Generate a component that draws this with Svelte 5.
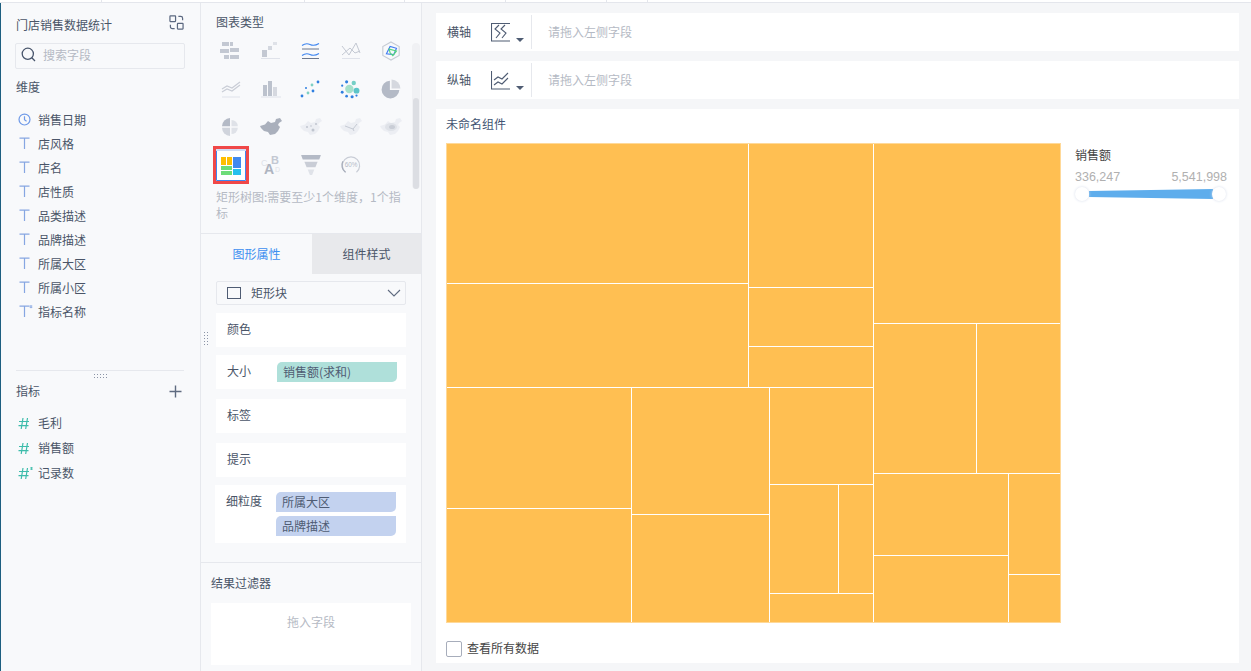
<script>
  const dims = [
    { name: '销售日期', icon: 'clock' },
    { name: '店风格', icon: 'T' },
    { name: '店名', icon: 'T' },
    { name: '店性质', icon: 'T' },
    { name: '品类描述', icon: 'T' },
    { name: '品牌描述', icon: 'T' },
    { name: '所属大区', icon: 'T' },
    { name: '所属小区', icon: 'T' },
    { name: '指标名称', icon: 'T*' }
  ];
  const metrics = [
    { name: '毛利', star: false },
    { name: '销售额', star: false },
    { name: '记录数', star: true }
  ];

  // x0, y0, x1, y1 of each tile, relative to the chart
  const tiles = [
    [0, 0, 302, 140], [0, 140, 302, 244], [302, 0, 427, 144], [302, 144, 427, 203], [302, 203, 427, 244],
    [0, 244, 185, 365], [0, 365, 185, 480], [185, 244, 323, 371], [185, 371, 323, 480],
    [323, 244, 427, 341], [323, 341, 392, 450], [392, 341, 427, 450], [323, 450, 427, 480],
    [427, 0, 615, 180], [427, 180, 530, 330], [530, 180, 615, 330],
    [427, 330, 562, 412], [427, 412, 562, 480], [562, 330, 615, 431], [562, 431, 615, 480]
  ];

  const china = 'M0 8L5 6.500 8 3 11 5 15 4 16 1 20 0 22 3 19 5 18 7 20 9 18 13 15 16 10 17 8 14 4 13 1 10z';
</script>

<div class="page">
  <div class="topline">
    <i style="left:101px"></i><i style="left:304px"></i><i style="left:404px"></i><i style="left:505px"></i><i style="left:606px"></i><i style="left:647px"></i>
  </div>
  <div class="main">
    <aside class="fields">
      <div class="ds-title">
        <span>门店销售数据统计</span>
        <svg width="15" height="15" viewBox="0 0 16 16" fill="none" stroke="#5b6880" stroke-width="1.300">
          <rect x="1" y="1" width="6" height="6" rx="0.500" />
          <rect x="9" y="9" width="6" height="6" rx="0.500" />
          <path d="M10 1.500h2.500a2 2 0 0 1 2 2v2M6 14.500H3.500a2 2 0 0 1-2-2v-2" />
        </svg>
      </div>
      <div class="search">
        <svg width="15" height="15" viewBox="0 0 15 15" fill="none" stroke="#47546b" stroke-width="1.300">
          <circle cx="6.800" cy="6.800" r="5.600" /><path d="M10.800 10.800l3.200 3.200" />
        </svg>
        <span>搜索字段</span>
      </div>
      <div class="sec">维度</div>
      <ul class="dim-list">
        {#each dims as d}
          <li>
            <span class="ico">
              {#if d.icon === 'clock'}
                <svg width="13" height="13" viewBox="0 0 14 14" fill="none" stroke="#6f9ae8" stroke-width="1.300">
                  <circle cx="7" cy="7" r="5.900" /><path d="M7 3.500V7.300l2.200 1.500" />
                </svg>
              {:else}
                <svg width="16" height="14" viewBox="0 0 16 14" fill="none" stroke="#86a6e2" stroke-width="1.200">
                  <path d="M1.500 2.200h10M6.500 2.200V13" />
                  {#if d.icon === 'T*'}<path d="M13 1.200v3M11.700 2h2.600M11.700 3.400h2.600" stroke-width="0.800" />{/if}
                </svg>
              {/if}
            </span>
            <span class="name">{d.name}</span>
          </li>
        {/each}
      </ul>
      <div class="divider"><span class="dots h"></span></div>
      <div class="sec metric-head">
        <span>指标</span>
        <svg width="13" height="13" viewBox="0 0 13 13" stroke="#5f6b80" stroke-width="1.400"><path d="M6.500 0.500v12M0.500 6.500h12" /></svg>
      </div>
      <ul class="metric-list">
        {#each metrics as m}
          <li>
            <span class="ico">
              <svg width="16" height="14" viewBox="0 0 16 14" fill="none" stroke="#3dbcab" stroke-width="1.200">
                <path d="M5 2L3.200 13M9.500 2L7.700 13M1 5.500h10M0.500 9.700h10" />
                {#if m.star}<path d="M13.500 1v3M12.200 1.800h2.600M12.200 3.200h2.600" stroke-width="0.800" />{/if}
              </svg>
            </span>
            <span class="name">{m.name}</span>
          </li>
        {/each}
      </ul>
    </aside>

    <section class="config">
      <div class="types">
        <div class="types-title">图表类型</div>
        <div class="type-grid">
          <!-- row 1 -->
          <svg viewBox="0 0 22 18"><g fill="#c3c8d2"><rect x="2" y="0" width="7" height="4"/><rect x="10" y="0" width="3" height="4"/><rect x="0" y="7" width="9" height="4"/><rect x="10" y="6" width="9" height="4"/><rect x="4" y="13" width="5" height="4"/><rect x="10" y="13" width="9" height="4"/></g></svg>
          <svg viewBox="0 0 22 18"><path d="M1 16.500h19" stroke="#dfe2ea"/><rect x="2" y="8" width="5" height="7" fill="#c3c8d2"/><rect x="8" y="4" width="4" height="4" fill="#d3d7df"/><rect x="13" y="0" width="4" height="3" fill="#dfe2e8"/></svg>
          <svg viewBox="0 0 22 18" fill="none"><path d="M2 3.500q4-3 8-1t9-1M2 13.500q4-3 8-1t9-1" stroke="#3f86f0" stroke-width="1.100"/><path d="M2 7h17M2 16.500h17" stroke="#5b6880" stroke-width="0.900"/></svg>
          <svg viewBox="0 0 22 18" fill="none"><path d="M2 4l7 9 7-12 4 10M2 13l8-7 5 5 5-2" stroke="#c3c8d2" stroke-width="1"/><path d="M2 16.500h18" stroke="#dfe2ea"/></svg>
          <svg viewBox="0 0 22 22" fill="none"><path d="M11 1l9 5v10l-9 5-9-5V6z" stroke="#c6cbd4" stroke-width="1.200"/><path d="M6 14l4-8 7 2-3 7z" stroke="#3f7cf0" stroke-width="1.300"/><path d="M9 9l8 2-4 5-3-3z" stroke="#59d878" stroke-width="1.300"/></svg>
          <!-- row 2 -->
          <svg viewBox="0 0 22 18" fill="none"><path d="M2 9l5-3 5 2 8-6M2 12l5-3 5 2 8-6" stroke="#c9cdd6" stroke-width="1.200"/><path d="M2 17h18" stroke="#dfe2ea"/></svg>
          <svg viewBox="0 0 22 18"><g fill="#bcc2cd"><rect x="3" y="5" width="4" height="11"/><rect x="8" y="1" width="4" height="15"/></g><rect x="13" y="7" width="4" height="9" fill="#d6d9e0"/><path d="M1 17h20" stroke="#dfe2ea"/></svg>
          <svg viewBox="0 0 22 18"><g fill="#2f7fe0"><circle cx="18" cy="2" r="1.400"/><circle cx="13" cy="11" r="1.400"/><circle cx="2" cy="16" r="1.400"/><circle cx="6" cy="8" r="1"/></g><g fill="#7ed0c4"><circle cx="12" cy="5" r="1.400"/><circle cx="8" cy="13" r="1.400"/></g></svg>
          <svg viewBox="0 0 20 18"><circle cx="8.500" cy="9" r="3.800" fill="#a5e0cb"/><circle cx="15" cy="10.500" r="2.700" fill="#5cc5c8"/><circle cx="12.500" cy="3.500" r="2" fill="#76cfc6"/><g fill="#2f7fe0"><circle cx="6" cy="2.500" r="1.400"/><circle cx="2" cy="6" r="1"/><circle cx="2" cy="12" r="1.300"/><circle cx="6" cy="15.500" r="1.200"/><circle cx="11" cy="16" r="1.400"/><circle cx="15" cy="15" r="1"/></g></svg>
          <svg viewBox="0 0 18 18"><path d="M8 1.500a8 8 0 1 0 8.500 8.500H8z" fill="#b4bac6"/><path d="M9.500 0.500a8 8 0 0 1 8 8h-8z" fill="#d5d8df"/></svg>
          <!-- row 3 -->
          <svg viewBox="0 0 22 20"><path d="M10 1v8.300H2a8.500 8.500 0 0 1 8-8.300z" fill="#b4bac6"/><path d="M11.500 3a6.300 6.300 0 0 1 6.300 6.300h-6.300z" fill="#dfe2e8"/><path d="M2 10.700h8V19a8.500 8.500 0 0 1-8-8.300z" fill="#d0d4dc"/><path d="M11.500 10.700h6.300a6.300 6.300 0 0 1-6.300 6.300z" fill="#dfe2e8"/></svg>
          <svg viewBox="0 0 22 18"><path d={china} fill="#aab0bc"/></svg>
          <svg viewBox="0 0 22 18"><path d={china} fill="#eceef3"/><g fill="#c0c5cf"><circle cx="7" cy="9" r="1"/><circle cx="16" cy="6" r="1"/><circle cx="13" cy="12" r="1.500"/><circle cx="11" cy="8" r="0.800"/></g></svg>
          <svg viewBox="0 0 22 18"><path d={china} fill="#eceef3"/><path d="M5 8l8 3 4-5M13 11l1 2" stroke="#c0c5cf" stroke-width="0.900" fill="none"/></svg>
          <svg viewBox="0 0 22 18"><path d={china} fill="#eceef3"/><ellipse cx="11" cy="9" rx="6" ry="4" fill="#dfe2e8"/><ellipse cx="12" cy="9" rx="3" ry="2" fill="#c9cdd6"/></svg>
          <!-- row 4 -->
          <div class="treemap-pick">
            <svg viewBox="0 0 30 32" width="30" height="32">
              <rect width="30" height="32" fill="#fff"/>
              <rect x="0" y="0" width="30" height="2" fill="#cfdcf5"/>
              <path d="M0.500 2v29.500h29V2" fill="none" stroke="#3f86f0"/>
              <rect x="5" y="8" width="5" height="8" fill="#ffbe00"/><rect x="11" y="8" width="5" height="8" fill="#ffbe00"/>
              <rect x="5" y="17" width="11" height="4" fill="#6edc78"/><rect x="5" y="22" width="11" height="4" fill="#6edc78"/>
              <rect x="17" y="8" width="8" height="11" fill="#4189ee"/><rect x="17" y="20" width="8" height="6" fill="#27c0ee"/>
            </svg>
          </div>
          <svg class="letters" viewBox="0 0 22 20"><text x="1" y="11" font-size="9" fill="#dfe2e8" font-family="Liberation Sans">C</text><text x="11" y="9" font-size="11" fill="#c3c8d2" font-family="Liberation Sans" font-weight="700">B</text><text x="4" y="19" font-size="14" fill="#aeb4c0" font-family="Liberation Sans" font-weight="700">A</text><text x="15" y="17" font-size="7" fill="#dfe2e8" font-family="Liberation Sans">D</text></svg>
          <svg viewBox="0 0 20 18"><path d="M1 0h18l-1.500 4h-15z" fill="#b4bac6"/><path d="M4 6h12l-2 5H6z" fill="#c9cdd6"/><path d="M7 13h6l-2 5H9z" fill="#e0e3e9"/></svg>
          <svg viewBox="0 0 22 22" fill="none"><path d="M5 19a9.500 9.500 0 1 1 12 0" stroke="#c9cdd6" stroke-width="1.300"/><path d="M5 19a9.500 9.500 0 0 1-3-12" stroke="#a5abb8" stroke-width="1.300"/><text x="11" y="13" font-size="7" text-anchor="middle" fill="#b4bac6" stroke="none" font-family="Liberation Sans">60%</text></svg>
        </div>
        <p class="hint">矩形树图:需要至少1个维度，1个指标</p>
        <div class="scroll"><div class="thumb"></div></div>
      </div>

      <div class="tabs">
        <div class="tab active">图形属性</div>
        <div class="tab">组件样式</div>
      </div>

      <div class="props">
        <span class="dots v"></span>
        <div class="mark-select">
          <span class="mark-box"></span>
          <span class="mark-name">矩形块</span>
          <svg width="14" height="8" viewBox="0 0 14 8" fill="none" stroke="#5f6b80" stroke-width="1.100"><path d="M1 1l6 6 6-6" /></svg>
        </div>
        <div class="prop"><span class="lbl">颜色</span></div>
        <div class="prop"><span class="lbl">大小</span><span class="pill green size-pill">销售额(求和)</span></div>
        <div class="prop spaced"><span class="lbl">标签</span></div>
        <div class="prop spaced"><span class="lbl">提示</span></div>
        <div class="prop gran">
          <span class="gran-label">细粒度</span>
          <div class="gran-pills">
            <span class="pill blue">所属大区</span>
            <span class="pill blue">品牌描述</span>
          </div>
        </div>
      </div>

      <div class="filter">
        <div class="filter-title">结果过滤器</div>
        <div class="filter-drop">拖入字段</div>
      </div>
    </section>

    <section class="board">
      <div class="axis">
        <span class="axis-label">横轴</span>
        <span class="axis-icon">
          <svg width="20" height="19" viewBox="0 0 20 19" fill="none" stroke="#4f5c73" stroke-width="1.100"><path d="M19 0.500H0.500V18H19" /><path d="M8 2L4 6l5 4-4 5M14 2l-4 4 5 4-4 5" /></svg>
          <i class="caret"></i>
        </span>
        <span class="axis-hint">请拖入左侧字段</span>
      </div>
      <div class="axis">
        <span class="axis-label">纵轴</span>
        <span class="axis-icon">
          <svg width="20" height="19" viewBox="0 0 20 19" fill="none" stroke="#4f5c73" stroke-width="1.100"><path d="M0.500 0v18H19" /><path d="M3 9l4-3 4 2 6-6M3 14l4-3 4 2 6-6" /></svg>
          <i class="caret"></i>
        </span>
        <span class="axis-hint">请拖入左侧字段</span>
      </div>

      <div class="widget">
        <div class="widget-title">未命名组件</div>
        <div class="chart-row">
          <svg class="treemap" width="615" height="480" viewBox="0 0 615 480">
            {#each tiles as t}
              <rect x={t[0] + 1} y={t[1] + 1} width={t[2] - t[0] - 1} height={t[3] - t[1] - 1} fill="#ffbf52" />
            {/each}
            <rect x="0.500" y="0.500" width="614" height="479" fill="none" stroke="#ffd999" />
          </svg>
          <div class="legend">
            <div class="legend-title">销售额</div>
            <div class="legend-range"><span>336,247</span><span>5,541,998</span></div>
            <div class="legend-slider">
              <svg width="124" height="10" viewBox="0 0 124 10" preserveAspectRatio="none"><path d="M0 2L124 0v10L0 8z" fill="#5eadec" /></svg>
              <i class="knob left"></i><i class="knob right"></i>
            </div>
          </div>
        </div>
        <label class="see-all"><span class="check"></span><span class="see-text">查看所有数据</span></label>
      </div>
    </section>
  </div>
</div>

<style>
  :global(body) {
    margin: 0;
    overflow: hidden;
  }

  .page {
    width: 1251px;
    height: 671px;
    display: flex;
    flex-direction: column;
    overflow: hidden;
    background: #f5f6f8;
    font-family: "Noto Sans CJK SC", "Liberation Sans", sans-serif;
    font-size: 12px;
    color: #4a5568;
    box-shadow: inset 1px 0 0 #1d5f80;
  }

  .topline {
    height: 2px;
    flex: none;
    position: relative;
    background: #fff;
    border-bottom: 1px solid #e4e6ec;
  }

  .topline i {
    position: absolute;
    top: 0;
    width: 1px;
    height: 2px;
    background: #e4e6ec;
  }

  .main {
    flex: 1;
    display: flex;
    min-height: 0;
  }

  ul {
    list-style: none;
    margin: 0;
    padding: 0;
  }

  /* left field list */
  .fields {
    width: 200px;
    flex: none;
    box-sizing: border-box;
    margin-left: 1px;
    padding: 11px 15px 0 15px;
    background: #f8f9fb;
    border-right: 1px solid #e6e8ed;
  }

  .ds-title {
    height: 20px;
    display: flex;
    align-items: center;
    justify-content: space-between;
    padding-right: 1px;
  }

  .ds-title svg {
    margin-top: -3px;
  }

  .search {
    height: 26px;
    box-sizing: border-box;
    margin: 9px 0 0 -1px;
    display: flex;
    align-items: center;
    gap: 7px;
    padding: 0 0 3px 5px;
    border: 1px solid #e6e8ed;
    border-radius: 2px;
    color: #b5bac4;
  }

  .sec {
    height: 20px;
    line-height: 20px;
    margin-top: 8px;
  }

  .dim-list {
    margin-top: 10px;
    height: 263px;
  }

  .dim-list li,
  .metric-list li {
    height: 24px;
    display: flex;
    align-items: center;
  }

  .metric-list li {
    height: 25px;
  }

  .ico {
    width: 22px;
    display: flex;
    flex: none;
    padding-left: 2px;
    box-sizing: border-box;
  }

  .divider {
    height: 10px;
    border-top: 1px solid #e6e8ed;
    margin-right: 1px;
    display: flex;
    justify-content: center;
    padding-top: 2px;
    box-sizing: border-box;
  }

  .metric-head {
    display: flex;
    justify-content: space-between;
    align-items: center;
    margin-top: 1px;
    padding-right: 3px;
  }

  .metric-list {
    margin-top: 9px;
  }

  .dots {
    display: block;
    background-image: radial-gradient(#8b94a6 0.7px, transparent 0.8px);
    background-size: 3px 3px;
  }

  .dots.h {
    width: 14px;
    height: 6px;
  }

  .dots.v {
    position: absolute;
    left: 2px;
    top: 57px;
    width: 6px;
    height: 14px;
  }

  /* middle config column */
  .config {
    width: 220px;
    flex: none;
    display: flex;
    flex-direction: column;
    background: #f8f9fb;
    border-right: 1px solid #e6e8ed;
  }

  .types {
    height: 231px;
    flex: none;
    position: relative;
    box-sizing: border-box;
    padding: 9px 0 0 15px;
    border-bottom: 1px solid #e6e8ed;
  }

  .types-title {
    height: 20px;
    line-height: 20px;
  }

  .type-grid {
    display: grid;
    grid-template-columns: repeat(5, 22px);
    grid-auto-rows: 20px;
    column-gap: 18px;
    row-gap: 18px;
    margin: 9px 0 0 4px;
    width: 180px;
    align-items: center;
    justify-items: center;
  }

  .type-grid > svg {
    width: 22px;
    height: 20px;
  }

  .type-grid > svg.letters {
    overflow: visible;
  }

  .treemap-pick {
    width: 30px;
    height: 32px;
    border: 3px solid #f04848;
    line-height: 0;
    margin: -9px -7px;
  }

  .hint {
    margin: 14px 15px 0 0;
    width: 190px;
    line-height: 16px;
    color: #b5bac4;
  }

  .scroll {
    position: absolute;
    right: 1px;
    top: 40px;
    width: 8px;
    height: 146px;
    border-radius: 4px;
    background: #f0f1f4;
  }

  .thumb {
    position: absolute;
    left: 1px;
    right: 1px;
    top: 55px;
    bottom: 0;
    border-radius: 3px;
    background: #dcdee3;
  }

  .tabs {
    display: flex;
    height: 40px;
    flex: none;
  }

  .tab {
    flex: 1;
    display: flex;
    align-items: center;
    justify-content: center;
    padding-bottom: 2px;
    box-sizing: border-box;
    background: #e8e9ec;
  }

  .tab.active {
    flex: none;
    width: 111px;
    background: #f8f9fb;
    color: #3d8ff0;
  }

  .props {
    position: relative;
    flex: none;
    height: 289px;
    box-sizing: border-box;
    padding: 7px 15px 0 15px;
    display: flex;
    flex-direction: column;
    gap: 8px;
    border-bottom: 1px solid #e6e8ed;
  }

  .mark-select {
    height: 22px;
    display: flex;
    align-items: center;
    padding: 0 4px 0 10px;
    border: 1px solid #e6e8ed;
    border-radius: 2px;
  }

  .mark-box {
    width: 12px;
    height: 10px;
    border: 1.500px solid #4f5c73;
  }

  .mark-name {
    flex: 1;
    margin-left: 10px;
    padding-bottom: 2px;
  }

  .prop {
    height: 34px;
    display: flex;
    align-items: center;
    padding-left: 11px;
    background: #fff;
    flex: none;
  }

  .prop.spaced {
    margin-top: 2px;
  }

  .lbl {
    padding-bottom: 3px;
  }

  .pill {
    height: 20px;
    display: block;
    line-height: 19px;
    box-sizing: border-box;
    padding-left: 6px;
    border-radius: 5px 0 5px 0;
    color: #4f5c73;
  }

  .green {
    background: #afe0da;
  }

  .blue {
    background: #c3d2ef;
  }

  .size-pill {
    width: 120px;
    margin-left: 26px;
  }

  .prop.gran {
    height: 58px;
    align-items: flex-start;
    margin-left: -1px;
    padding-left: 11px;
    padding-top: 7px;
    box-sizing: border-box;
  }

  .gran-label {
    line-height: 18px;
    width: 50px;
  }

  .gran-pills {
    width: 120px;
    display: flex;
    flex-direction: column;
    gap: 4px;
  }

  .filter {
    flex: 1;
    padding: 10px 10px 0 10px;
  }

  .filter-title {
    height: 20px;
    line-height: 20px;
  }

  .filter-drop {
    height: 62px;
    box-sizing: border-box;
    margin-top: 10px;
    background: #fff;
    text-align: center;
    padding-top: 10px;
    color: #b5bac4;
  }

  /* right board */
  .board {
    flex: 1;
    min-width: 0;
    box-sizing: border-box;
    padding: 10px 12px 8px 14px;
    display: flex;
    flex-direction: column;
    gap: 10px;
  }

  .axis {
    height: 38px;
    flex: none;
    display: flex;
    align-items: center;
    background: #fff;
  }

  .axis-label {
    width: 55px;
    padding: 0 0 2px 11px;
    box-sizing: border-box;
  }

  .axis-icon {
    position: relative;
    width: 40px;
    height: 34px;
    display: flex;
    align-items: center;
    border-right: 1px solid #e6e8ed;
  }

  .caret {
    position: absolute;
    left: 25px;
    top: 23px;
    border: 4px solid transparent;
    border-top: 4px solid #4f5c73;
    border-bottom: 0;
  }

  .axis-hint {
    margin-left: 16px;
    padding-bottom: 2px;
    color: #b5bac4;
  }

  .widget {
    flex: 1;
    background: #fff;
    box-sizing: border-box;
    padding: 5px 10px 0 10px;
  }

  .widget-title {
    height: 20px;
    line-height: 20px;
    color: #425372;
  }

  .chart-row {
    display: flex;
    margin-top: 9px;
  }

  .treemap {
    display: block;
    flex: none;
  }

  .legend {
    width: 152px;
    margin-left: 14px;
    padding-top: 2px;
    color: #444;
  }

  .legend-title {
    line-height: 20px;
  }

  .legend-range {
    display: flex;
    justify-content: space-between;
    color: #b0b0b0;
    line-height: 16px;
    margin-top: 4px;
    font-family: "Liberation Sans", sans-serif;
    font-size: 12.500px;
  }

  .legend-slider {
    position: relative;
    height: 14px;
    margin-top: 2px;
    display: flex;
    align-items: center;
    padding-left: 14px;
  }

  .knob {
    position: absolute;
    top: 0;
    width: 14px;
    height: 14px;
    border-radius: 50%;
    background: #fff;
    box-shadow: 0 0 3px #d5dcea;
  }

  .knob.left {
    left: 0;
  }

  .knob.right {
    left: 137px;
  }

  .see-all {
    display: flex;
    align-items: center;
    gap: 5px;
    margin-top: 16px;
    color: #444;
  }

  .see-text {
    padding-bottom: 3px;
  }

  .check {
    width: 14px;
    height: 14px;
    border: 1px solid #a7adbb;
    border-radius: 2px;
  }
</style>
